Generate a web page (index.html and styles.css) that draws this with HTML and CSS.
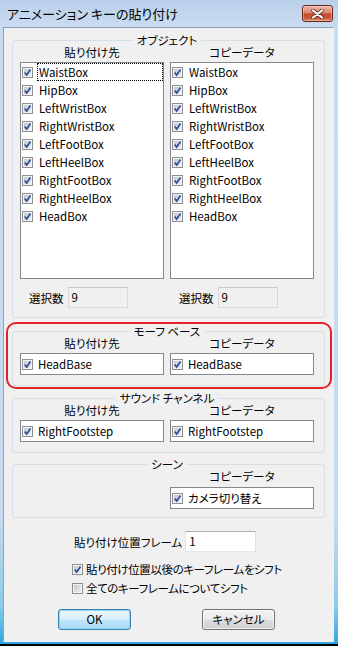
FILE: index.html
```html
<!DOCTYPE html>
<html lang="ja">
<head>
<meta charset="utf-8">
<title>アニメーション キーの貼り付け</title>
<link rel="stylesheet" href="styles.css">
</head>
<body>
<svg class="defs" width="0" height="0" aria-hidden="true">
  <defs>
    <linearGradient id="cbg" x1="0" y1="0" x2="1" y2="1">
      <stop offset="0" stop-color="#c3c6cc"/>
      <stop offset="1" stop-color="#eef0f2"/>
    </linearGradient>
  </defs>
</svg>
<div class="window">
  <div class="titlebar">
    <span class="title">アニメーション キーの貼り付け</span>
    <div class="close">
      <svg width="13" height="10" viewBox="0 0 13 10"><path d="M2 1.5 11 8.5M11 1.5 2 8.5" stroke="#5a2a22" stroke-width="3.6" stroke-linecap="round"/><path d="M2 1.5 11 8.5M11 1.5 2 8.5" stroke="#fff" stroke-width="2.2" stroke-linecap="round"/></svg>
    </div>
  </div>
  <div class="client">
    <fieldset class="group g-object">
      <legend>オブジェクト</legend>
      <div class="cols">
        <div class="col">
          <div class="colhead">貼り付け先</div>
          <div class="listbox">
            <div class="item"><svg class="cb" viewBox="0 0 11 11"><rect x=".5" y=".5" width="10" height="10" fill="#f5f5f5" stroke="#8f8f8f"/><rect x="2" y="2" width="7" height="7" fill="url(#cbg)"/><path d="M2.7 5.4 4.7 8 8.5 2.6" fill="none" stroke="#2f4ea3" stroke-width="1.7"/></svg><span class="label focus">WaistBox</span></div>
            <div class="item"><svg class="cb" viewBox="0 0 11 11"><rect x=".5" y=".5" width="10" height="10" fill="#f5f5f5" stroke="#8f8f8f"/><rect x="2" y="2" width="7" height="7" fill="url(#cbg)"/><path d="M2.7 5.4 4.7 8 8.5 2.6" fill="none" stroke="#2f4ea3" stroke-width="1.7"/></svg><span class="label">HipBox</span></div>
            <div class="item"><svg class="cb" viewBox="0 0 11 11"><rect x=".5" y=".5" width="10" height="10" fill="#f5f5f5" stroke="#8f8f8f"/><rect x="2" y="2" width="7" height="7" fill="url(#cbg)"/><path d="M2.7 5.4 4.7 8 8.5 2.6" fill="none" stroke="#2f4ea3" stroke-width="1.7"/></svg><span class="label">LeftWristBox</span></div>
            <div class="item"><svg class="cb" viewBox="0 0 11 11"><rect x=".5" y=".5" width="10" height="10" fill="#f5f5f5" stroke="#8f8f8f"/><rect x="2" y="2" width="7" height="7" fill="url(#cbg)"/><path d="M2.7 5.4 4.7 8 8.5 2.6" fill="none" stroke="#2f4ea3" stroke-width="1.7"/></svg><span class="label">RightWristBox</span></div>
            <div class="item"><svg class="cb" viewBox="0 0 11 11"><rect x=".5" y=".5" width="10" height="10" fill="#f5f5f5" stroke="#8f8f8f"/><rect x="2" y="2" width="7" height="7" fill="url(#cbg)"/><path d="M2.7 5.4 4.7 8 8.5 2.6" fill="none" stroke="#2f4ea3" stroke-width="1.7"/></svg><span class="label">LeftFootBox</span></div>
            <div class="item"><svg class="cb" viewBox="0 0 11 11"><rect x=".5" y=".5" width="10" height="10" fill="#f5f5f5" stroke="#8f8f8f"/><rect x="2" y="2" width="7" height="7" fill="url(#cbg)"/><path d="M2.7 5.4 4.7 8 8.5 2.6" fill="none" stroke="#2f4ea3" stroke-width="1.7"/></svg><span class="label">LeftHeelBox</span></div>
            <div class="item"><svg class="cb" viewBox="0 0 11 11"><rect x=".5" y=".5" width="10" height="10" fill="#f5f5f5" stroke="#8f8f8f"/><rect x="2" y="2" width="7" height="7" fill="url(#cbg)"/><path d="M2.7 5.4 4.7 8 8.5 2.6" fill="none" stroke="#2f4ea3" stroke-width="1.7"/></svg><span class="label">RightFootBox</span></div>
            <div class="item"><svg class="cb" viewBox="0 0 11 11"><rect x=".5" y=".5" width="10" height="10" fill="#f5f5f5" stroke="#8f8f8f"/><rect x="2" y="2" width="7" height="7" fill="url(#cbg)"/><path d="M2.7 5.4 4.7 8 8.5 2.6" fill="none" stroke="#2f4ea3" stroke-width="1.7"/></svg><span class="label">RightHeelBox</span></div>
            <div class="item"><svg class="cb" viewBox="0 0 11 11"><rect x=".5" y=".5" width="10" height="10" fill="#f5f5f5" stroke="#8f8f8f"/><rect x="2" y="2" width="7" height="7" fill="url(#cbg)"/><path d="M2.7 5.4 4.7 8 8.5 2.6" fill="none" stroke="#2f4ea3" stroke-width="1.7"/></svg><span class="label">HeadBox</span></div>
          </div>
          <div class="stat"><span class="stat-label">選択数</span><span class="ro">9</span></div>
        </div>
        <div class="col">
          <div class="colhead">コピーデータ</div>
          <div class="listbox">
            <div class="item"><svg class="cb" viewBox="0 0 11 11"><rect x=".5" y=".5" width="10" height="10" fill="#f5f5f5" stroke="#8f8f8f"/><rect x="2" y="2" width="7" height="7" fill="url(#cbg)"/><path d="M2.7 5.4 4.7 8 8.5 2.6" fill="none" stroke="#2f4ea3" stroke-width="1.7"/></svg><span class="label">WaistBox</span></div>
            <div class="item"><svg class="cb" viewBox="0 0 11 11"><rect x=".5" y=".5" width="10" height="10" fill="#f5f5f5" stroke="#8f8f8f"/><rect x="2" y="2" width="7" height="7" fill="url(#cbg)"/><path d="M2.7 5.4 4.7 8 8.5 2.6" fill="none" stroke="#2f4ea3" stroke-width="1.7"/></svg><span class="label">HipBox</span></div>
            <div class="item"><svg class="cb" viewBox="0 0 11 11"><rect x=".5" y=".5" width="10" height="10" fill="#f5f5f5" stroke="#8f8f8f"/><rect x="2" y="2" width="7" height="7" fill="url(#cbg)"/><path d="M2.7 5.4 4.7 8 8.5 2.6" fill="none" stroke="#2f4ea3" stroke-width="1.7"/></svg><span class="label">LeftWristBox</span></div>
            <div class="item"><svg class="cb" viewBox="0 0 11 11"><rect x=".5" y=".5" width="10" height="10" fill="#f5f5f5" stroke="#8f8f8f"/><rect x="2" y="2" width="7" height="7" fill="url(#cbg)"/><path d="M2.7 5.4 4.7 8 8.5 2.6" fill="none" stroke="#2f4ea3" stroke-width="1.7"/></svg><span class="label">RightWristBox</span></div>
            <div class="item"><svg class="cb" viewBox="0 0 11 11"><rect x=".5" y=".5" width="10" height="10" fill="#f5f5f5" stroke="#8f8f8f"/><rect x="2" y="2" width="7" height="7" fill="url(#cbg)"/><path d="M2.7 5.4 4.7 8 8.5 2.6" fill="none" stroke="#2f4ea3" stroke-width="1.7"/></svg><span class="label">LeftFootBox</span></div>
            <div class="item"><svg class="cb" viewBox="0 0 11 11"><rect x=".5" y=".5" width="10" height="10" fill="#f5f5f5" stroke="#8f8f8f"/><rect x="2" y="2" width="7" height="7" fill="url(#cbg)"/><path d="M2.7 5.4 4.7 8 8.5 2.6" fill="none" stroke="#2f4ea3" stroke-width="1.7"/></svg><span class="label">LeftHeelBox</span></div>
            <div class="item"><svg class="cb" viewBox="0 0 11 11"><rect x=".5" y=".5" width="10" height="10" fill="#f5f5f5" stroke="#8f8f8f"/><rect x="2" y="2" width="7" height="7" fill="url(#cbg)"/><path d="M2.7 5.4 4.7 8 8.5 2.6" fill="none" stroke="#2f4ea3" stroke-width="1.7"/></svg><span class="label">RightFootBox</span></div>
            <div class="item"><svg class="cb" viewBox="0 0 11 11"><rect x=".5" y=".5" width="10" height="10" fill="#f5f5f5" stroke="#8f8f8f"/><rect x="2" y="2" width="7" height="7" fill="url(#cbg)"/><path d="M2.7 5.4 4.7 8 8.5 2.6" fill="none" stroke="#2f4ea3" stroke-width="1.7"/></svg><span class="label">RightHeelBox</span></div>
            <div class="item"><svg class="cb" viewBox="0 0 11 11"><rect x=".5" y=".5" width="10" height="10" fill="#f5f5f5" stroke="#8f8f8f"/><rect x="2" y="2" width="7" height="7" fill="url(#cbg)"/><path d="M2.7 5.4 4.7 8 8.5 2.6" fill="none" stroke="#2f4ea3" stroke-width="1.7"/></svg><span class="label">HeadBox</span></div>
          </div>
          <div class="stat"><span class="stat-label">選択数</span><span class="ro">9</span></div>
        </div>
      </div>
    </fieldset>

    <div class="highlight">
      <fieldset class="group g-morph">
        <legend>モーフ ベース</legend>
        <div class="cols">
          <div class="col">
            <div class="colhead">貼り付け先</div>
            <div class="field"><svg class="cb" viewBox="0 0 11 11"><rect x=".5" y=".5" width="10" height="10" fill="#f5f5f5" stroke="#8f8f8f"/><rect x="2" y="2" width="7" height="7" fill="url(#cbg)"/><path d="M2.7 5.4 4.7 8 8.5 2.6" fill="none" stroke="#2f4ea3" stroke-width="1.7"/></svg><span class="flabel">HeadBase</span></div>
          </div>
          <div class="col">
            <div class="colhead">コピーデータ</div>
            <div class="field"><svg class="cb" viewBox="0 0 11 11"><rect x=".5" y=".5" width="10" height="10" fill="#f5f5f5" stroke="#8f8f8f"/><rect x="2" y="2" width="7" height="7" fill="url(#cbg)"/><path d="M2.7 5.4 4.7 8 8.5 2.6" fill="none" stroke="#2f4ea3" stroke-width="1.7"/></svg><span class="flabel">HeadBase</span></div>
          </div>
        </div>
      </fieldset>
    </div>

    <fieldset class="group g-sound">
      <legend>サウンド チャンネル</legend>
      <div class="cols">
        <div class="col">
          <div class="colhead">貼り付け先</div>
          <div class="field"><svg class="cb" viewBox="0 0 11 11"><rect x=".5" y=".5" width="10" height="10" fill="#f5f5f5" stroke="#8f8f8f"/><rect x="2" y="2" width="7" height="7" fill="url(#cbg)"/><path d="M2.7 5.4 4.7 8 8.5 2.6" fill="none" stroke="#2f4ea3" stroke-width="1.7"/></svg><span class="flabel">RightFootstep</span></div>
        </div>
        <div class="col">
          <div class="colhead">コピーデータ</div>
          <div class="field"><svg class="cb" viewBox="0 0 11 11"><rect x=".5" y=".5" width="10" height="10" fill="#f5f5f5" stroke="#8f8f8f"/><rect x="2" y="2" width="7" height="7" fill="url(#cbg)"/><path d="M2.7 5.4 4.7 8 8.5 2.6" fill="none" stroke="#2f4ea3" stroke-width="1.7"/></svg><span class="flabel">RightFootstep</span></div>
        </div>
      </div>
    </fieldset>

    <fieldset class="group g-scene">
      <legend>シーン</legend>
      <div class="cols">
        <div class="col"></div>
        <div class="col">
          <div class="colhead">コピーデータ</div>
          <div class="field field-scene"><svg class="cb" viewBox="0 0 11 11"><rect x=".5" y=".5" width="10" height="10" fill="#f5f5f5" stroke="#8f8f8f"/><rect x="2" y="2" width="7" height="7" fill="url(#cbg)"/><path d="M2.7 5.4 4.7 8 8.5 2.6" fill="none" stroke="#2f4ea3" stroke-width="1.7"/></svg><span class="flabel">カメラ切り替え</span></div>
        </div>
      </div>
    </fieldset>

    <div class="frame-row">
      <span>貼り付け位置フレーム</span>
      <span class="textbox">1</span>
    </div>

    <div class="checks">
      <div class="check-row"><svg class="cb" viewBox="0 0 11 11"><rect x=".5" y=".5" width="10" height="10" fill="#f5f5f5" stroke="#8f8f8f"/><rect x="2" y="2" width="7" height="7" fill="url(#cbg)"/><path d="M2.7 5.4 4.7 8 8.5 2.6" fill="none" stroke="#2f4ea3" stroke-width="1.7"/></svg><span class="clabel">貼り付け位置以後のキーフレームをシフト</span></div>
      <div class="check-row"><svg class="cb" viewBox="0 0 11 11"><rect x=".5" y=".5" width="10" height="10" fill="#f5f5f5" stroke="#8f8f8f"/><rect x="2" y="2" width="7" height="7" fill="url(#cbg)"/></svg><span class="clabel">全てのキーフレームについてシフト</span></div>
    </div>

    <div class="buttons">
      <button class="btn btn-default">OK</button>
      <button class="btn">キャンセル</button>
    </div>
  </div>
</div>
</body>
</html>
```

FILE: styles.css
```css
* {
  box-sizing: border-box;
}

body {
  margin: 0;
  font-family: "Noto Sans CJK JP", "Noto Sans", sans-serif;
  font-size: 11.5px;
  font-feature-settings: "palt";
  color: #000;
}

.defs {
  position: absolute;
  width: 0;
  height: 0;
}

.window {
  width: 338px;
  height: 646px;
  display: flex;
  flex-direction: column;
  background: linear-gradient(180deg, #bad0ea 0, #cadcf1 28px, #c6daef 80%, #8ccbea 94%, #2ea5dd 100%);
  border-bottom: 2px solid #000;
}

.titlebar {
  flex: none;
  height: 27px;
  display: flex;
  justify-content: space-between;
  align-items: flex-start;
  padding: 0 5px 0 7px;
}

.title {
  font-size: 13px;
  line-height: 15px;
  margin-top: 6px;
}

.close {
  width: 31px;
  height: 17px;
  margin-top: 5px;
  border: 1px solid #6b2318;
  border-radius: 3px;
  background: linear-gradient(180deg, #ebb4a6 0%, #dd8772 45%, #c64a30 52%, #c9573c 80%, #df8f70 100%);
  box-shadow: inset 0 0 0 1px rgba(255, 255, 255, 0.35);
  display: flex;
  align-items: center;
  justify-content: center;
}

.close svg {
  display: block;
}

.client {
  flex: 1;
  margin: 0 4px 2px 3px;
  background: #f0f0f0;
  border: 1px solid;
  border-color: #8fa3bb #eef2f7 #eef2f7 #8fa3bb;
  padding: 7px 8px 0;
  display: flex;
  flex-direction: column;
}

.client > * {
  flex: none;
}

.group {
  margin: 0;
  padding: 0 10px 9px 7px;
  border: 1px solid #d5dfe5;
  border-radius: 3px;
  min-width: 0;
}

.group legend {
  margin: 0 auto;
  padding: 0 4px;
  line-height: 10px;
}

.cols {
  display: grid;
  grid-template-columns: 144px 144px;
  column-gap: 6px;
}

.colhead {
  text-align: center;
  line-height: 14px;
  height: 14px;
}

.listbox {
  margin-top: 3px;
  height: 217px;
  border: 1px solid #828790;
  background: #fff;
  padding: 0 0 0 1px;
}

.item {
  display: flex;
  align-items: center;
  height: 18px;
}

.cb {
  display: block;
  flex: none;
  width: 11px;
  height: 11px;
}

.label {
  flex: 1;
  margin-left: 4px;
  height: 18px;
  line-height: 16px;
  padding-left: 1px;
  border: 1px dotted transparent;
  white-space: nowrap;
}

.label.focus {
  border-color: #000;
}

.stat {
  display: flex;
  align-items: center;
  height: 21px;
  margin-top: 8px;
  padding-left: 9px;
}

.stat-label {
  line-height: 14px;
}

.ro {
  margin-left: 4px;
  width: 60px;
  height: 21px;
  border: 1px solid #d9d9d9;
  border-top-color: #c6c6c6;
  background: #f0f0f0;
  padding: 2px 0 0 3px;
  line-height: 14px;
}

.highlight {
  margin: 4px -7px 0 -6px;
  padding: 2px 5px 1px 4px;
  border: 2px solid #e3212b;
  border-radius: 10px;
}

.g-morph {
  padding-bottom: 10px;
}

.g-sound {
  margin-top: 4px;
  padding-bottom: 10px;
}

.g-scene {
  margin-top: 6px;
  padding-bottom: 8px;
}

.field {
  margin-top: 3px;
  height: 22px;
  border: 1px solid #828790;
  background: #fff;
  display: flex;
  align-items: center;
  padding-left: 1px;
}

.field-scene {
  margin-top: 4px;
}

.flabel {
  margin-left: 5px;
  line-height: 16px;
  white-space: nowrap;
}

.frame-row {
  display: flex;
  align-items: center;
  height: 21px;
  margin-top: 13px;
  padding-left: 62px;
}

.textbox {
  margin-left: 3px;
  width: 71px;
  height: 21px;
  background: #fff;
  border: 1px solid;
  border-color: #abadb3 #dbdfe6 #e3e9ef #e2e3ea;
  padding: 1px 0 0 3px;
  line-height: 17px;
}

.checks {
  margin-top: 8px;
  display: flex;
  flex-direction: column;
  gap: 1px;
}

.check-row {
  display: flex;
  align-items: center;
  height: 18px;
  padding-left: 60px;
}

.clabel {
  margin-left: 3px;
  line-height: 16px;
  white-space: nowrap;
  letter-spacing: -0.4px;
}

.buttons {
  display: flex;
  margin-top: 12px;
  padding-left: 46px;
  gap: 71px;
}

.btn {
  width: 73px;
  height: 21px;
  padding: 0;
  font: inherit;
  line-height: 17px;
  color: #000;
  border: 1px solid #707070;
  border-radius: 3px;
  background: linear-gradient(180deg, #f2f2f2 0%, #ebebeb 50%, #dddddd 51%, #cfcfcf 100%);
  box-shadow: inset 0 0 0 1px rgba(255, 255, 255, 0.75);
}

.btn-default {
  border-color: #3c7fb1;
  background: linear-gradient(180deg, #eaf6fd 0%, #d9f0fc 50%, #bee6fd 51%, #a7d9f5 100%);
  box-shadow: inset 0 0 0 1px #8fd6f7;
}
```
